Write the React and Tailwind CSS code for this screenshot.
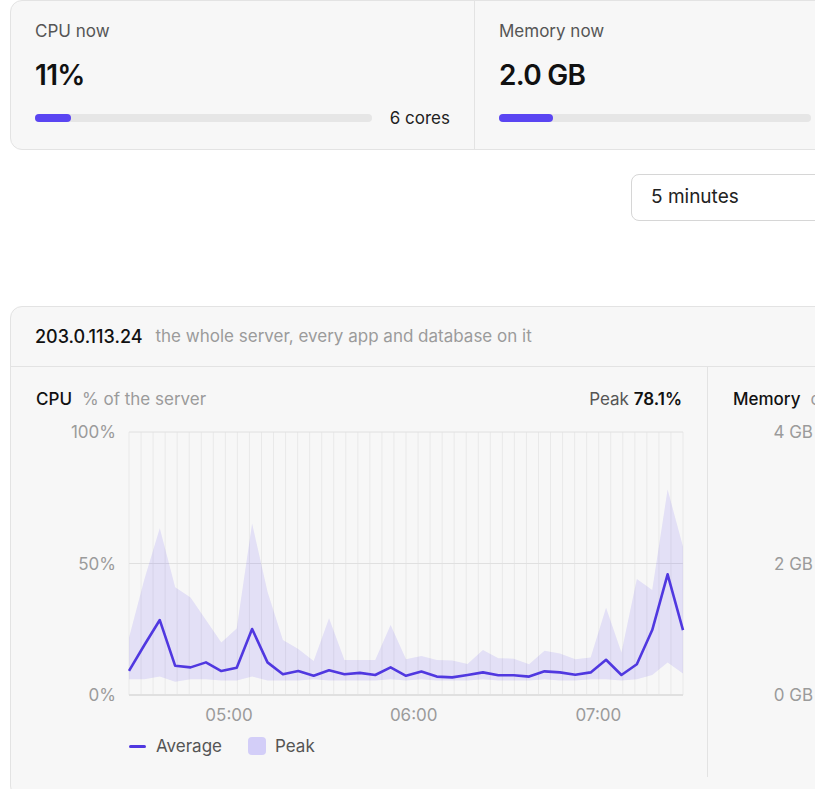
import React from 'react';

// 37 samples, 5 minutes apart (04:27:30 → 07:27:30)
const cpuAvg = [9.2, 19, 28.5, 11.1, 10.5, 12.4, 9.1, 10.4, 25.1, 12.4, 7.9, 9.1, 7.3, 9.4, 7.9, 8.4, 7.6, 10.5, 7.3, 8.9, 7.0, 6.7, 7.6, 8.6, 7.5, 7.5, 7.0, 9.0, 8.6, 7.7, 8.6, 13.4, 7.6, 11.7, 24.7, 45.9, 24.7];
const cpuMax = [21.8, 44, 63.4, 41, 37.1, 28.5, 20, 25.3, 65.2, 39.3, 20.9, 17.5, 12.9, 29.2, 13.3, 13.3, 13.3, 26.6, 13.6, 14.8, 13.3, 13.1, 11.8, 17.1, 14, 13.8, 11.7, 16.8, 15.8, 13.6, 14.3, 33.2, 16.2, 44.1, 39.9, 78.1, 56.4];
const cpuMin = [6, 6, 7, 5, 6, 6, 5.5, 5.5, 7, 5.5, 5.5, 5.5, 6, 5.5, 5.5, 5.5, 5.5, 6, 5.5, 6, 5.5, 5.5, 5.5, 6, 5.5, 5.5, 5.5, 6, 5.5, 5.5, 6, 6, 5.5, 6, 7.6, 12.4, 8.2];

const memAvg = cpuAvg.map((v, i) => 1.9 + Math.sin(i / 3) * 0.08 + v / 400);
const memMax = memAvg.map((v) => v + 0.12);
const memMin = memAvg.map((v) => v - 0.08);

const PLOT_X0 = 93;
const PLOT_X1 = 647;
const PLOT_Y0 = 12;
const PLOT_Y1 = 275;

const Chart = ({ avg, max, min, top, yLabels, xLabels }) => {
  const n = avg.length;
  const px = (i) => PLOT_X0 + (i / (n - 1)) * (PLOT_X1 - PLOT_X0);
  const py = (v) => PLOT_Y1 - (v / top) * (PLOT_Y1 - PLOT_Y0);
  const band = [
    ...max.map((v, i) => `${px(i)},${py(v)}`),
    ...min.map((v, i) => `${px(i)},${py(v)}`).reverse(),
  ].join(' ');
  const line = avg.map((v, i) => `${px(i)},${py(v)}`).join(' ');
  const verticals = Array.from({ length: 47 }, (_, i) => PLOT_X0 + (i / 46) * (PLOT_X1 - PLOT_X0));

  return (
    <svg width="646" height="312" className="block overflow-visible">
      {verticals.map((x) => (
        <line key={x} x1={x} x2={x} y1={PLOT_Y0} y2={PLOT_Y1} stroke="#e9e9e9" strokeWidth="1" />
      ))}
      {[0, 0.5, 1].map((f) => (
        <line key={f} x1={PLOT_X0} x2={PLOT_X1} y1={PLOT_Y1 - f * (PLOT_Y1 - PLOT_Y0)} y2={PLOT_Y1 - f * (PLOT_Y1 - PLOT_Y0)} stroke="#e0e0e0" strokeWidth={f === 0 ? 2 : 1} />
      ))}
      <polygon points={band} fill="#5b45f0" fillOpacity="0.13" />
      <polyline points={line} fill="none" stroke="#5038e0" strokeWidth="2.6" strokeLinejoin="round" />
      {yLabels.map((l, i) => (
        <text key={l} x="80" y={PLOT_Y1 - (i / (yLabels.length - 1)) * (PLOT_Y1 - PLOT_Y0) + 6} textAnchor="end" fontSize="17" fill="#9b9b9b" fontFamily="Inter, sans-serif">
          {l}
        </text>
      ))}
      {xLabels.map(([l, f]) => (
        <text key={l} x={PLOT_X0 + f * (PLOT_X1 - PLOT_X0)} y="301" textAnchor="middle" fontSize="17" fill="#9b9b9b" fontFamily="Inter, sans-serif">
          {l}
        </text>
      ))}
    </svg>
  );
};

const xLabels = [['05:00', 0.1806], ['06:00', 0.5139], ['07:00', 0.8472]];

const ChartColumn = ({ title, subtitle, peak, border, ...chart }) => (
  <div className={`w-[696px] shrink-0 px-[25px] pt-[20px] pb-[19px] ${border ? 'border-l border-[#e3e3e3]' : ''}`}>
    <div className="flex items-center justify-between text-[17px] leading-6">
      <div className="flex items-center gap-[10px]">
        <span className="font-medium text-[#111]">{title}</span>
        <span className="text-[#9b9b9b]">{subtitle}</span>
      </div>
      <div className="text-[#555]">
        Peak <span className="font-semibold text-[#111]">{peak}</span>
      </div>
    </div>
    <div className="mt-[9px]">
      <Chart {...chart} />
    </div>
    <div className="mt-[2px] ml-[93px] flex items-center text-[17px] leading-6 text-[#555]">
      <span className="h-[3px] w-[17px] rounded-full bg-[#5038e0]" />
      <span className="ml-[10px]">Average</span>
      <span className="ml-[26px] h-[18px] w-[18px] rounded-[4px] bg-[#d3cef8]" />
      <span className="ml-[9px]">Peak</span>
    </div>
  </div>
);

const StatColumn = ({ label, value, pct, side, sideClass = '', border }) => (
  <div className={`w-[463px] shrink-0 px-6 pt-[18px] pb-[19px] ${border ? 'border-l border-[#e3e3e3]' : ''}`}>
    <p className="text-[17px] leading-6 text-[#555]">{label}</p>
    <p className="mt-[15px] text-[28px] leading-[34px] font-semibold tracking-tight text-[#111]">{value}</p>
    <div className="mt-[14px] flex items-center gap-[18px]">
      <div className="h-2 flex-1 rounded-full bg-[#e6e6e6]">
        <div className="h-2 rounded-full bg-[#5a45f2]" style={{ width: `${pct}%` }} />
      </div>
      <span className={`text-[17px] leading-6 text-[#222] ${sideClass}`}>{side}</span>
    </div>
  </div>
);

export default function App() {
  return (
    <div className="h-[789px] w-[815px] overflow-hidden bg-white font-['Inter',sans-serif]">
      <div className="w-[1412px] px-[10px]">
        {/* Now cards */}
        <div className="flex rounded-xl border border-[#e3e3e3] bg-[#f7f7f7]">
          <StatColumn label="CPU now" value="11%" pct={10.7} side="6 cores" />
          <StatColumn label="Memory now" value="2.0 GB" pct={17.3} side="of 11.7 GB" sideClass="w-[84px] text-right" border />
          <StatColumn label="Disk now" value="38 GB" pct={48} side="of 80 GB" border />
        </div>

        {/* Range picker */}
        <div className="mt-[24px] flex">
          <div className="ml-[621px] flex h-[47px] w-[240px] items-center rounded-lg border border-[#d6d6d6] bg-white pl-[19px] text-[19px] text-[#222]">
            5 minutes
          </div>
        </div>

        {/* Server panel */}
        <div className="mt-[85px] rounded-xl border border-[#e3e3e3] bg-[#f7f7f7] pb-5">
          <div className="flex h-[60px] items-center gap-[13px] border-b border-[#e3e3e3] px-6 text-[17px]">
            <span className="text-[18px] font-medium text-[#111]">203.0.113.24</span>
            <span className="text-[#9b9b9b]">the whole server, every app and database on it</span>
          </div>
          <div className="flex">
            <ChartColumn
              title="CPU"
              subtitle="% of the server"
              peak="78.1%"
              avg={cpuAvg}
              max={cpuMax}
              min={cpuMin}
              top={100}
              yLabels={['0%', '50%', '100%']}
              xLabels={xLabels}
            />
            <ChartColumn
              border
              title="Memory"
              subtitle="of the server"
              peak="2.3 GB"
              avg={memAvg}
              max={memMax}
              min={memMin}
              top={4}
              yLabels={['0 GB', '2 GB', '4 GB']}
              xLabels={xLabels}
            />
          </div>
        </div>
      </div>
    </div>
  );
}
